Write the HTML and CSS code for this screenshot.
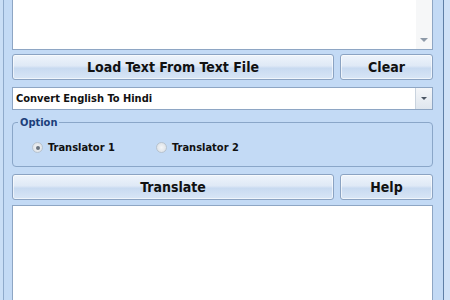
FILE: index.html
```html
<!DOCTYPE html>
<html>
<head>
<meta charset="utf-8">
<link rel="stylesheet" href="styles.css">
</head>
<body>
<div class="frame">
  <div class="edge-left"></div>
  <div class="main">
    <div class="textbox top-box">
      <div class="scroll"><span class="arrow"></span></div>
    </div>
    <div class="row">
      <div class="btn wide">Load Text From Text File</div>
      <div class="btn narrow">Clear</div>
    </div>
    <div class="combo">
      <span class="combo-text">Convert English To Hindi</span>
      <span class="combo-drop"><span class="arrow"></span></span>
    </div>
    <fieldset class="group">
      <legend>Option</legend>
      <label class="radio"><span class="dot on"></span>Translator 1</label>
      <label class="radio"><span class="dot"></span>Translator 2</label>
    </fieldset>
    <div class="row row-b">
      <div class="btn wide">Translate</div>
      <div class="btn narrow">Help</div>
    </div>
    <div class="textbox bottom-box"></div>
  </div>
  <div class="edge-right"></div>
</div>
</body>
</html>
```
FILE: styles.css
```css
html, body {
  margin: 0;
  padding: 0;
  width: 450px;
  height: 300px;
  overflow: hidden;
  background: #c3daf5;
  font-family: "DejaVu Sans Condensed", "DejaVu Sans", Verdana, sans-serif;
  font-stretch: condensed;
}
.frame {
  display: flex;
  height: 300px;
}
.edge-left {
  width: 3px;
  background: #c9def6;
  border-right: 1px solid #8faacb;
}
.edge-right {
  width: 6px;
  background: #cfe1f7;
  border-left: 1px solid #5f7fa6;
}
.main {
  flex: 1;
  padding: 0 10px 0 8px;
  display: flex;
  flex-direction: column;
}
.textbox {
  background: #fff;
  border: 1px solid #8ea6c4;
  box-sizing: border-box;
  display: flex;
  justify-content: flex-end;
}
.top-box {
  height: 50px;
  border-top: none;
}
.scroll {
  width: 16px;
  background: #f6f7f8;
  display: flex;
  align-items: flex-end;
  justify-content: center;
  padding-bottom: 7px;
  box-sizing: border-box;
}
.arrow {
  width: 0;
  height: 0;
  border-left: 4px solid transparent;
  border-right: 4px solid transparent;
  border-top: 4px solid #8e9aa8;
}
.row {
  display: flex;
  gap: 6px;
  margin-top: 4px;
}
.row-b {
  margin-top: 7px;
}
.btn {
  height: 26px;
  box-sizing: border-box;
  border: 1px solid #8ba3c2;
  border-radius: 3px;
  background: linear-gradient(#eef4fb 0%, #dfe9f6 45%, #c8daf0 55%, #d8e6f6 100%);
  box-shadow: inset 0 0 0 1px rgba(255,255,255,0.6);
  display: flex;
  align-items: center;
  justify-content: center;
  font-weight: bold;
  font-size: 14px;
  color: #111;
}
.wide { flex: 1; }
.narrow { width: 93px; }
.combo {
  margin-top: 7px;
  height: 23px;
  box-sizing: border-box;
  border: 1px solid #8ea6c4;
  background: #fff;
  display: flex;
  align-items: center;
}
.combo-text {
  flex: 1;
  padding-left: 3px;
  font-size: 11px;
  font-weight: bold;
  color: #111;
}
.combo-drop {
  width: 16px;
  align-self: stretch;
  background: linear-gradient(#f4f6f9, #dfe6ee);
  border-left: 1px solid #c9d3de;
  display: flex;
  align-items: center;
  justify-content: center;
}
.combo-drop .arrow {
  border-left-width: 3px;
  border-right-width: 3px;
  border-top-width: 3px;
  border-top-color: #4a5563;
}
.group {
  margin: 6px 0 0;
  padding: 12px 0 0 5px;
  height: 51px;
  box-sizing: border-box;
  border: 1px solid #8aa6c8;
  border-radius: 4px;
  display: flex;
  align-items: center;
}
.group legend {
  padding: 0 2px;
  margin-left: 0;
  font-size: 11px;
  font-weight: bold;
  color: #1c3f7a;
}
.radio {
  display: flex;
  align-items: center;
  font-size: 11px;
  font-weight: bold;
  color: #111;
  width: 124px;
}
.radio:first-of-type {
  margin-left: 14px;
}
.dot {
  width: 11px;
  height: 11px;
  box-sizing: border-box;
  border-radius: 50%;
  border: 1px solid #b7c3cf;
  background: radial-gradient(circle, #f3f5f7, #d8dde3);
  margin-right: 5px;
  display: flex;
  align-items: center;
  justify-content: center;
}
.dot.on::after {
  content: "";
  width: 4px;
  height: 4px;
  border-radius: 50%;
  background: #6a7480;
}
.bottom-box {
  margin-top: 5px;
  flex: 1;
  border-bottom: none;
}
```
